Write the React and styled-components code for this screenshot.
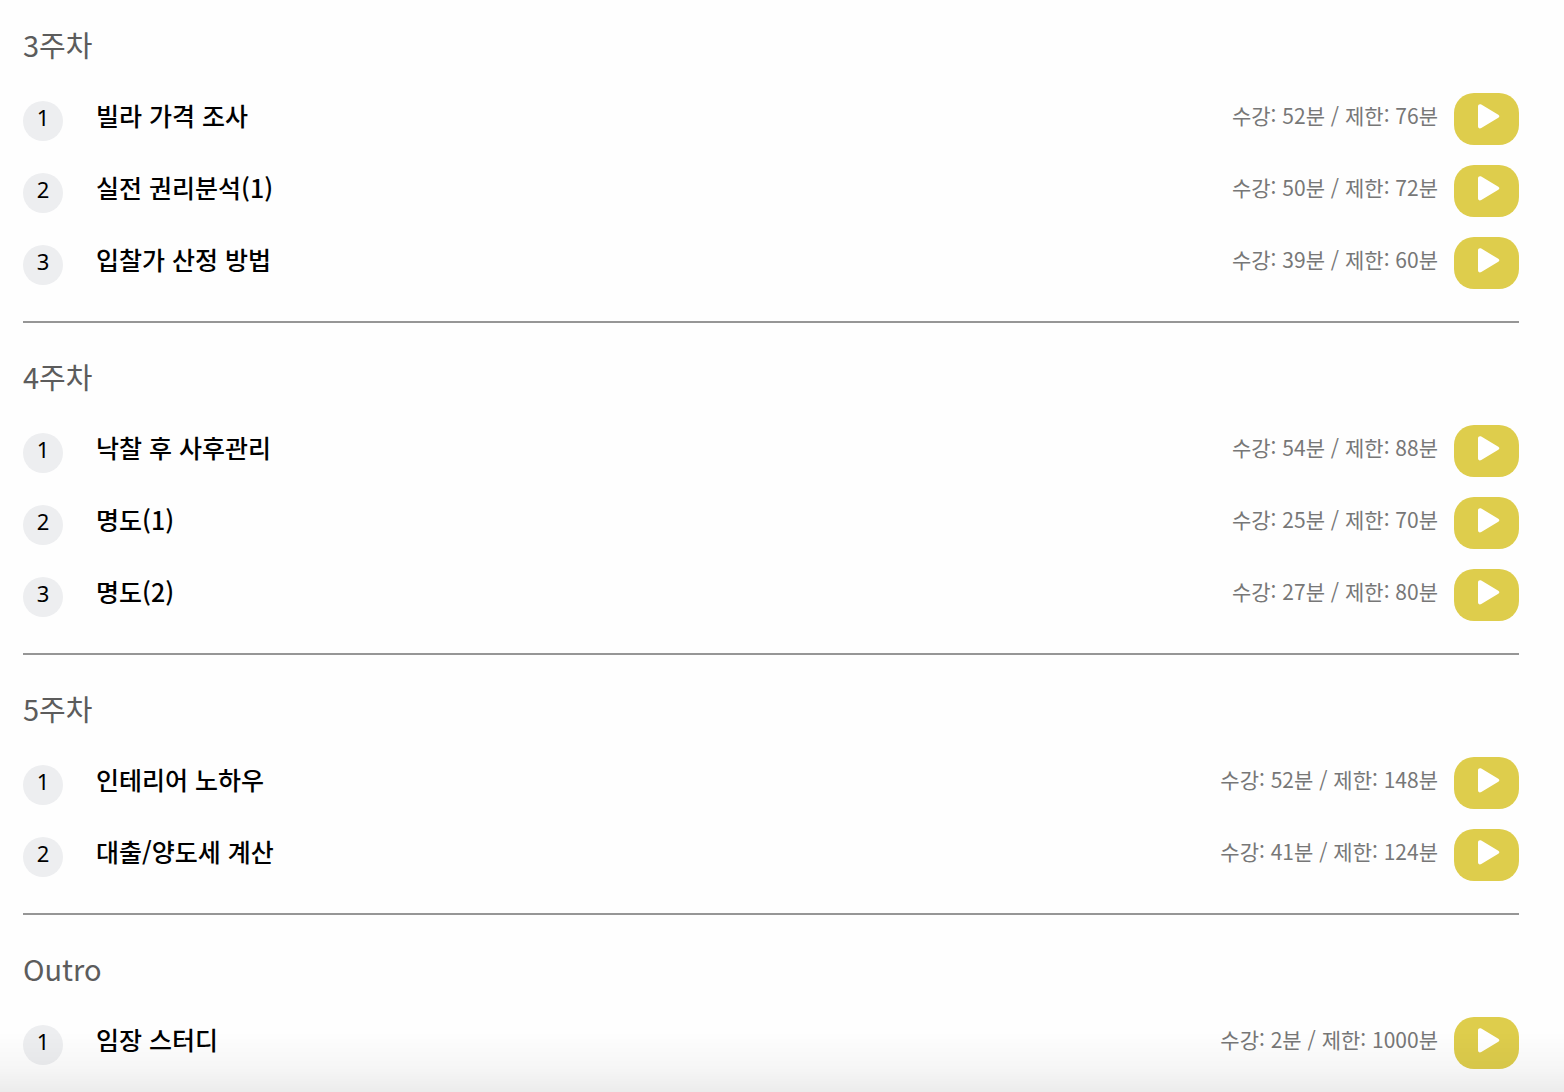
import React from 'react';
import styled, { createGlobalStyle } from 'styled-components';

const GlobalStyle = createGlobalStyle`
  * { box-sizing: border-box; }
  body {
    margin: 0;
    background: #fefefe;
    color: #000;
    font-family: "Noto Sans CJK KR", "Noto Sans", sans-serif;
  }
`;

const Page = styled.main`
  padding: 0 45px 20px 23px;
`;

const Week = styled.section`
  padding: 35px 0 32px;
  border-bottom: 2px solid #969696;

  &:first-of-type { padding-top: 26px; }
  &:last-of-type { padding-bottom: 0; border-bottom: 0; }
`;

const WeekTitle = styled.h2`
  margin: 0 0 31px;
  color: #5c5c5c;
  font-size: 29px;
  font-weight: 400;
  line-height: 36px;
`;

const LectureList = styled.ol`
  display: flex;
  flex-direction: column;
  gap: 20px;
  margin: 0;
  padding: 0;
  list-style: none;
`;

const Lecture = styled.li`
  display: flex;
  align-items: flex-start;
  height: 52px;
`;

const Badge = styled.span`
  flex: none;
  width: 40px;
  height: 40px;
  margin: 8px 33px 0 0;
  border-radius: 50%;
  background: #edeef0;
  font-family: "Noto Sans", sans-serif;
  font-size: 22px;
  line-height: 32px;
  text-align: center;
`;

const LectureTitle = styled.span`
  flex: 1;
  font-size: 25px;
  font-weight: 500;
  line-height: 44px;
`;

const Duration = styled.span`
  margin-right: 16px;
  color: #777;
  font-size: 21px;
  line-height: 44px;
  white-space: nowrap;
`;

const PlayButton = styled.button`
  display: flex;
  flex: none;
  width: 65px;
  height: 52px;
  padding: 11px 0 0 24px;
  border: 0;
  border-radius: 20px;
  background: #decd4c;
  color: #fff;
  cursor: pointer;
`;

const BottomShade = styled.div`
  position: fixed;
  right: 0;
  bottom: 0;
  left: 0;
  height: 60px;
  background: linear-gradient(to bottom, rgba(0, 0, 0, 0), rgba(0, 0, 0, 0.03) 60%, rgba(0, 0, 0, 0.07));
  pointer-events: none;
`;

const PlayIcon = () => (
  <svg width="22" height="25" viewBox="0 0 22 25" aria-hidden="true">
    <path
      d="M0 2.4C0 .5 1.7-.4 3.3.6L20.3 10.8C21.700 11.6 21.700 13 20.3 13.8L3.3 24C1.700 25 0 24.2 0 22.3Z"
      fill="currentColor"
    />
  </svg>
);

const weeks = [
  {
    title: '3주차',
    lectures: [
      { title: '빌라 가격 조사', watched: 52, limit: 76 },
      { title: '실전 권리분석(1)', watched: 50, limit: 72 },
      { title: '입찰가 산정 방법', watched: 39, limit: 60 },
    ],
  },
  {
    title: '4주차',
    lectures: [
      { title: '낙찰 후 사후관리', watched: 54, limit: 88 },
      { title: '명도(1)', watched: 25, limit: 70 },
      { title: '명도(2)', watched: 27, limit: 80 },
    ],
  },
  {
    title: '5주차',
    lectures: [
      { title: '인테리어 노하우', watched: 52, limit: 148 },
      { title: '대출/양도세 계산', watched: 41, limit: 124 },
    ],
  },
  {
    title: 'Outro',
    lectures: [{ title: '임장 스터디', watched: 2, limit: 1000 }],
  },
];

export default function App() {
  return (
    <>
      <GlobalStyle />
      <Page lang="ko">
        {weeks.map((week) => (
          <Week key={week.title}>
            <WeekTitle>{week.title}</WeekTitle>
            <LectureList>
              {week.lectures.map((lecture, index) => (
                <Lecture key={lecture.title}>
                  <Badge>{index + 1}</Badge>
                  <LectureTitle>{lecture.title}</LectureTitle>
                  <Duration>{`수강: ${lecture.watched}분 / 제한: ${lecture.limit}분`}</Duration>
                  <PlayButton type="button" aria-label={lecture.title}>
                    <PlayIcon />
                  </PlayButton>
                </Lecture>
              ))}
            </LectureList>
          </Week>
        ))}
      </Page>
      <BottomShade />
    </>
  );
}
